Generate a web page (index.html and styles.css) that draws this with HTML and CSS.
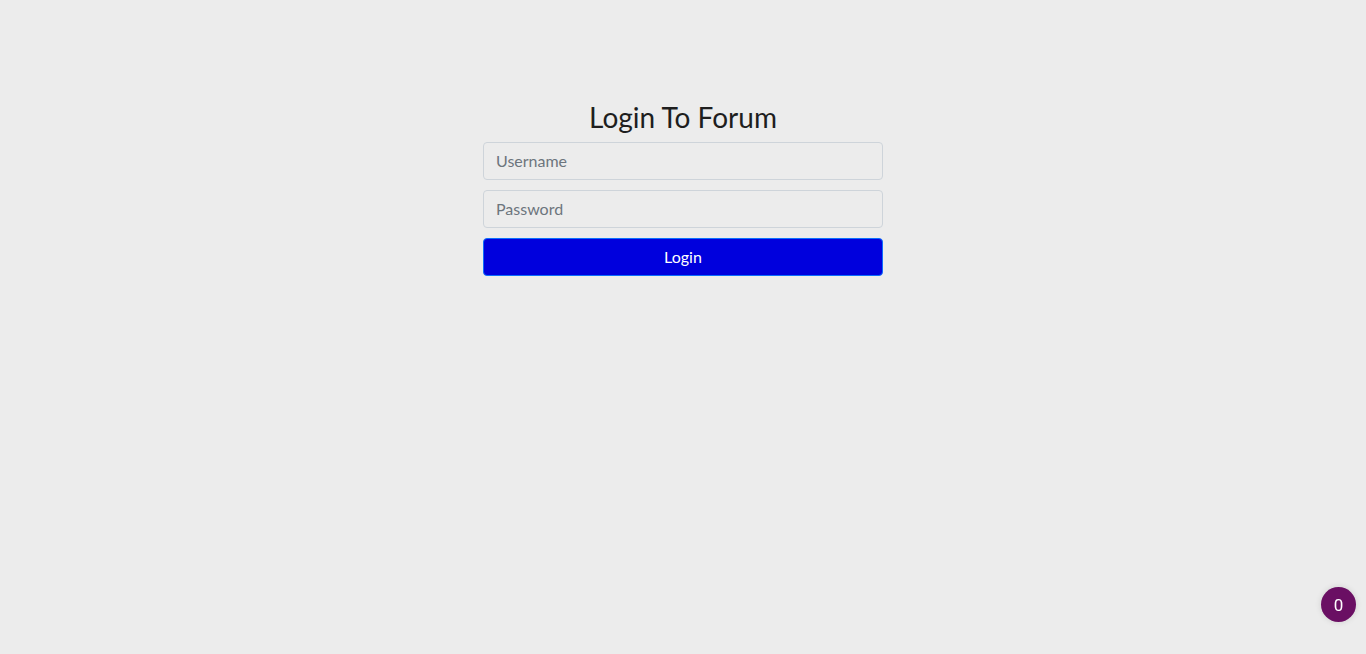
FILE: index.html
```html
<!DOCTYPE html>
<html lang="en">
<head>
<meta charset="utf-8">
<title>Login To Forum</title>
<link rel="stylesheet" href="styles.css">
</head>
<body>
<main class="page">
  <form class="login">
    <h2 class="title">Login To Forum</h2>
    <input class="field" type="text" placeholder="Username">
    <input class="field" type="password" placeholder="Password">
    <button class="btn" type="button">Login</button>
  </form>
</main>
<div class="badge">0</div>
</body>
</html>
```

FILE: styles.css
```css
* { box-sizing: border-box; }
html, body { margin: 0; height: 100%; }
body {
  background: #ececec;
  font-family: Lato, "Open Sans", sans-serif;
  color: #212529;
}
.page {
  display: flex;
  justify-content: center;
  padding-top: 100px;
}
.login {
  width: 400px;
  display: flex;
  flex-direction: column;
  gap: 10px;
}
.title {
  margin: 0 0 -2px;
  text-align: center;
  font-weight: 400;
  font-size: 28px;
  line-height: 34px;
  color: #1e1e1e;
}
.field {
  height: 38px;
  padding: 5px 12px 7px;
  font: 16px Lato, sans-serif;
  color: #212529;
  background: #ececec;
  border: 1px solid #ced4da;
  border-radius: 4px;
  outline: none;
}
.field::placeholder { color: #6c757d; }
.btn {
  height: 38px;
  padding: 0 12px 2px;
  font: 16px Lato, sans-serif;
  color: #fff;
  background: #0000dd;
  border: 1px solid #0d6efd;
  border-radius: 4px;
}
.badge {
  position: fixed;
  right: 10px;
  bottom: 32px;
  width: 35px;
  height: 35px;
  border-radius: 50%;
  background: #6a0f63;
  color: #fff;
  font: 17px Roboto, sans-serif;
  display: flex;
  align-items: center;
  justify-content: center;
  box-shadow: 0 0 6px rgba(0,0,0,0.12);
}
```
